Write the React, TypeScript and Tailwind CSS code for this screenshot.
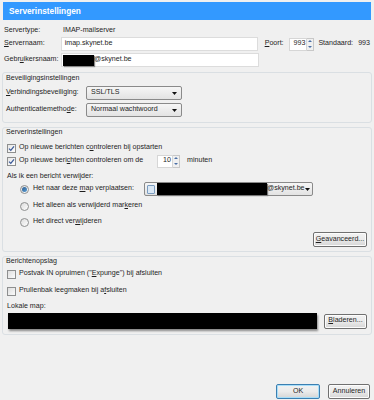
import React from "react";

const U = ({ children }: { children: React.ReactNode }) => <span className="underline underline-offset-[1px]">{children}</span>;

function Check() {
  return (
    <span className="w-[9px] h-[9px] border border-[#8e8f8f] bg-gradient-to-br from-[#e6e6e6] to-[#ffffff] flex items-center justify-center shrink-0">
      <svg width="7" height="7" viewBox="0 0 7 7">
        <path d="M1 3.6 L2.8 5.4 L6 1.4" stroke="#3b5a98" strokeWidth="1.3" fill="none" />
      </svg>
    </span>
  );
}
function EmptyCheck() {
  return <span className="w-[9px] h-[9px] border border-[#8e8f8f] bg-gradient-to-br from-[#dedede] to-[#fbfbfb] shrink-0" />;
}
function Radio({ on }: { on?: boolean }) {
  return (
    <span className="w-[9px] h-[9px] rounded-full border border-[#8e8f8f] bg-gradient-to-br from-[#dcdcdc] to-[#ffffff] flex items-center justify-center shrink-0">
      {on && <span className="w-[5px] h-[5px] rounded-full bg-gradient-to-br from-[#2d5a8c] to-[#5aa0d8]" />}
    </span>
  );
}
function Arrow() {
  return (
    <svg width="5" height="3" viewBox="0 0 5 3" className="shrink-0">
      <path d="M0 0 H5 L2.5 3 Z" fill="#111" />
    </svg>
  );
}
function Select({ text, w }: { text: string; w: string }) {
  return (
    <div className={`${w} h-[14px] rounded-[2px] border border-[#8a8a8a] bg-gradient-to-b from-[#f6f6f6] to-[#e3e3e3] flex items-center pl-[4px] pr-[4px] justify-between`}>
      <span>{text}</span>
      <Arrow />
    </div>
  );
}
function Spin({ v, w }: { v: string; w: string }) {
  return (
    <div className={`${w} h-[13px] flex`}>
      <div className="flex-1 bg-white border border-[#d6d6d6] flex items-center justify-end pr-[1px]">{v}</div>
      <div className="w-[7px] flex flex-col border border-l-0 border-[#c8c8c8] bg-[#f0f0f0]">
        <div className="flex-1 flex items-center justify-center">
          <svg width="4" height="2" viewBox="0 0 4 2"><path d="M0 2 H4 L2 0 Z" fill="#4a6fa5" /></svg>
        </div>
        <div className="flex-1 flex items-center justify-center">
          <svg width="4" height="2" viewBox="0 0 4 2"><path d="M0 0 H4 L2 2 Z" fill="#4a6fa5" /></svg>
        </div>
      </div>
    </div>
  );
}
function Btn({ children, w, def }: { children: React.ReactNode; w: string; def?: boolean }) {
  return (
    <div
      className={`${w} h-[15px] rounded-[2px] border ${def ? "border-[#3c7fb1] shadow-[inset_0_0_0_1px_#a8def9]" : "border-[#707070] shadow-[inset_0_0_0_1px_#fcfcfc]"} bg-gradient-to-b from-[#f2f2f2] via-[#ebebeb] to-[#d5d5d5] flex items-center justify-center`}
    >
      {children}
    </div>
  );
}

export default function App() {
  return (
    <div className="w-[374px] h-[400px] bg-[#f0f0f0] text-[7.1px] leading-none text-[#1e1e1e] font-['Liberation_Sans',Arial,sans-serif] pt-[2px] overflow-hidden">
      <div className="mx-[3px] h-[18px] bg-[#3399ff] flex items-center pl-[6px] text-white font-bold text-[8.3px]">
        Serverinstellingen
      </div>

      <div className="px-[4px]">
        <div className="mt-[5px] h-[12px] flex items-center">
          <span className="w-[59px]">Servertype:</span>
          <span>IMAP-mailserver</span>
        </div>
        <div className="h-[14px] flex items-center">
          <span className="w-[57px]"><U>S</U>ervernaam:</span>
          <div className="w-[198px] h-[14px] bg-white border border-[#dcdcdc] flex items-center pl-[3px]">imap.skynet.be</div>
          <span className="ml-[7px] w-[24px]"><U>P</U>oort:</span>
          <Spin v="993" w="w-[26px]" />
          <span className="ml-[4px] w-[40px]">Standaard:</span>
          <span>993</span>
        </div>
        <div className="mt-[2px] h-[14px] flex items-center">
          <span className="w-[57px] whitespace-nowrap">Gebr<U>u</U>ikersnaam:</span>
          <div className="w-[198px] h-[14px] bg-white border border-[#dcdcdc] flex items-center pl-[1px]">
            <span className="w-[31px] h-[11px] bg-black shadow-[1px_1px_1px_#888]" />
            <span>@skynet.be</span>
          </div>
        </div>
      </div>

      <div className="mx-[2px] mt-[5px] h-[51px] border border-[#dadfe3] rounded-[3px] px-[3px]">
        <div className="h-[11px] flex items-center pt-[1px]">Beveiligingsinstellingen</div>
        <div className="mt-[2px] h-[14px] flex items-center">
          <span className="w-[80px] whitespace-nowrap"><U>V</U>erbindingsbeveiliging:</span>
          <Select text="SSL/TLS" w="w-[96px]" />
        </div>
        <div className="mt-[3px] h-[14px] flex items-center">
          <span className="w-[80px] whitespace-nowrap">Authenticatiemetho<U>d</U>e:</span>
          <Select text="Normaal wachtwoord" w="w-[96px]" />
        </div>
      </div>

      <div className="mx-[2px] mt-[4px] h-[125px] border border-[#dadfe3] rounded-[3px] px-[4px]">
        <div className="h-[9px] flex items-center -ml-[1px]">Serverinstellingen</div>
        <div className="mt-[5px] h-[12px] flex items-center gap-[3px]">
          <Check />
          <span>Op nieuwe berichten c<U>o</U>ntroleren bij opstarten</span>
        </div>
        <div className="h-[14px] flex items-center">
          <Check />
          <span className="ml-[3px] w-[138px] whitespace-nowrap">Op nieuwe beri<U>c</U>hten controleren om de</span>
          <Spin v="10" w="w-[23px]" />
          <span className="ml-[7px]">minuten</span>
        </div>
        <div className="mt-[4px] h-[10px] flex items-center">Als ik een bericht verwijder:</div>
        <div className="h-[14px] flex items-center pl-[13px]">
          <Radio on />
          <span className="ml-[4px] w-[111px] whitespace-nowrap">Het naar deze <U>m</U>ap verplaatsen:</span>
          <div className="w-[169px] h-[14px] rounded-[2px] border border-[#8a8a8a] bg-gradient-to-b from-[#f6f6f6] to-[#e3e3e3] flex items-center pl-[2px] pr-[4px]">
            <span className="w-[8px] h-[9px] border border-[#7a9cc0] bg-[#dbe8f5] rounded-[1px] shrink-0" />
            <span className="ml-[2px] w-[110px] h-[12px] bg-black shadow-[1px_1px_1px_#777] shrink-0" />
            <span className="flex-1 whitespace-nowrap">@skynet.be</span>
            <Arrow />
          </div>
        </div>
        <div className="mt-[4px] h-[12px] flex items-center pl-[13px]">
          <Radio />
          <span className="ml-[4px]">Het alleen als verwijderd mar<U>k</U>eren</span>
        </div>
        <div className="mt-[4px] h-[12px] flex items-center pl-[13px]">
          <Radio />
          <span className="ml-[4px]">Het direct ver<U>w</U>ijderen</span>
        </div>
        <div className="mt-[4px] flex justify-end">
          <Btn w="w-[54px]"><U>G</U>eavanceerd...</Btn>
        </div>
      </div>

      <div className="mx-[2px] mt-[4px] h-[79px] border border-[#dadfe3] rounded-[3px] px-[4px]">
        <div className="h-[10px] flex items-center -ml-[1px]">Berichtenopslag</div>
        <div className="mt-[1px] h-[12px] flex items-center gap-[3px]">
          <EmptyCheck />
          <span>Postvak IN opruimen ("<U>E</U>xpunge") bij afsluiten</span>
        </div>
        <div className="mt-[5px] h-[12px] flex items-center gap-[3px]">
          <EmptyCheck />
          <span>Prullenbak leegmaken bij a<U>f</U>sluiten</span>
        </div>
        <div className="mt-[5px] h-[10px] flex items-center">Lokale map:</div>
        <div className="mt-[1px] h-[16px] flex items-center">
          <div className="ml-[1px] w-[310px] h-[16px] bg-black shadow-[1px_2px_2px_#888]" />
          <div className="ml-[7px]">
            <Btn w="w-[43px]"><U>B</U>laderen...</Btn>
          </div>
        </div>
      </div>

      <div className="mt-[49px] flex justify-end pr-[4px] gap-[8px]">
        <Btn w="w-[44px]" def>OK</Btn>
        <Btn w="w-[42px]">Annuleren</Btn>
      </div>
    </div>
  );
}
